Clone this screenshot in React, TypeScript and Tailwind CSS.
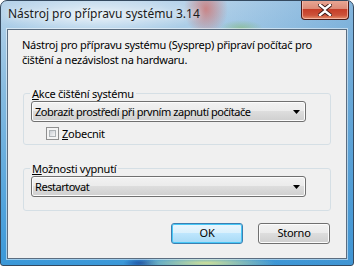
import React from 'react';

const winBtn =
  'h-[21px] w-[72px] rounded-[3px] text-black flex items-center justify-center';

const Combo = ({ value }: { value: string }) => (
  <div className="h-[21px] w-[275px] rounded-[3px] border border-[#707070] bg-[linear-gradient(to_bottom,#f2f2f2_0%,#ebebeb_50%,#dddddd_50%,#cfcfcf_100%)] shadow-[inset_0_0_0_1px_#fcfcfc] flex items-center justify-between pl-[3px] pr-[5px]">
    <span className="leading-[15px] whitespace-nowrap tracking-[-0.45px]">{value}</span>
    <svg width="7" height="4" viewBox="0 0 7 4">
      <path d="M0 0H7L3.5 4Z" fill="#000" />
    </svg>
  </div>
);

export default function App() {
  return (
    <div className="relative w-[354px] h-[266px] overflow-hidden rounded-t-[7px] rounded-b-[3px] border border-[#34495f] font-['Segoe_UI','Noto_Sans',sans-serif] text-black bg-[radial-gradient(ellipse_105px_20px_at_95px_14px,rgba(255,255,255,0.7),transparent),radial-gradient(ellipse_22px_28px_at_205px_8px,rgba(205,120,118,0.85),transparent),radial-gradient(ellipse_22px_8px_at_240px_27px,rgba(130,185,110,0.55),transparent),radial-gradient(ellipse_70px_7px_at_205px_262px,rgba(215,228,150,0.95),transparent),radial-gradient(ellipse_18px_5px_at_140px_262px,rgba(25,75,160,0.9),transparent),linear-gradient(to_right,transparent_55%,rgba(70,145,205,0.45)),linear-gradient(to_bottom,#b9d4ea_0%,#86bbe0_35%,#4fa2db_80%,#3b98d8_100%)]">
      {/* title bar */}
      <div className="h-[28px] flex justify-between">
        <span className="pl-[7px] pt-[5px] text-[12px] leading-[16px] text-[#1a1a1a] whitespace-nowrap [text-shadow:0_0_6px_rgba(255,255,255,0.9)]">
          Nástroj pro přípravu systému 3.14
        </span>
        <div className="-mt-[1px] mr-[4px] h-[20px] w-[48px] rounded-b-[4px] border border-[#4a1a16] border-t-0 bg-[linear-gradient(to_bottom,#eaa996_0%,#dc8c78_45%,#c63e28_50%,#cc523a_80%,#e4906c_100%)] shadow-[inset_0_0_0_1px_rgba(255,210,200,0.6)] flex items-center justify-center">
          <svg width="14" height="12" viewBox="0 0 14 12">
            <path
              d="M2 1L7 5L12 1M2 11L7 7L12 11"
              stroke="#3a1a16"
              strokeWidth="4.2"
              fill="none"
              strokeLinecap="square"
            />
            <path
              d="M2 1L7 5L12 1M2 11L7 7L12 11"
              stroke="#fff"
              strokeWidth="2.4"
              fill="none"
              strokeLinecap="square"
            />
          </svg>
        </div>
      </div>

      {/* client area */}
      <div className="ml-[6px] w-[340px] h-[230px] border border-[#5b6d80] bg-[#f0f0f0] shadow-[0_0_0_1px_rgba(255,255,255,0.5)] text-[11px] tracking-[-0.25px]">
        <p className="ml-[14px] mt-[7px] leading-[15px] whitespace-nowrap">
          Nástroj pro přípravu systému (Sysprep) připraví počítač pro
          <br />
          čištění a nezávislost na hardwaru.
        </p>

        <fieldset className="ml-[15px] mt-[19px] w-[308px] rounded-[3px] border border-[#d5dfe5] pb-[4px]">
          <legend className="ml-[6px] px-[2px] leading-[15px]">
            <span className="underline">A</span>kce čištění systému
          </legend>
          <div className="ml-[7px]">
            <Combo value="Zobrazit prostředí při prvním zapnutí počítače" />
          </div>
          <div className="mt-[5px] ml-[22px] flex items-center gap-[3px] h-[13px]">
            <div className="w-[13px] h-[13px] border border-[#8f8f8f] bg-[#f4f4f4] p-[2px]">
              <div className="w-full h-full border border-[#adb2b5] bg-[linear-gradient(135deg,#cbcfd5,#f6f6f6)]" />
            </div>
            <span className="leading-[13px]">
              <span className="underline">Z</span>obecnit
            </span>
          </div>
        </fieldset>

        <fieldset className="ml-[15px] mt-[16px] w-[308px] rounded-[3px] border border-[#d5dfe5] pb-[13px]">
          <legend className="ml-[6px] px-[2px] leading-[15px]">
            <span className="underline">M</span>ožnosti vypnutí
          </legend>
          <div className="ml-[7px]">
            <Combo value="Restartovat" />
          </div>
        </fieldset>

        <div className="mt-[12px] mr-[16px] flex justify-end gap-[15px]">
          <div
            className={`${winBtn} border border-[#3c7fb1] bg-[linear-gradient(to_bottom,#eaf6fd_0%,#d9f0fc_50%,#bee6fd_50%,#a7d9f5_100%)] shadow-[inset_0_0_0_1px_#48c8f7]`}
          >
            OK
          </div>
          <div
            className={`${winBtn} border border-[#707070] bg-[linear-gradient(to_bottom,#f2f2f2_0%,#ebebeb_50%,#dddddd_50%,#cfcfcf_100%)] shadow-[inset_0_0_0_1px_#fcfcfc]`}
          >
            Storno
          </div>
        </div>
      </div>
    </div>
  );
}
